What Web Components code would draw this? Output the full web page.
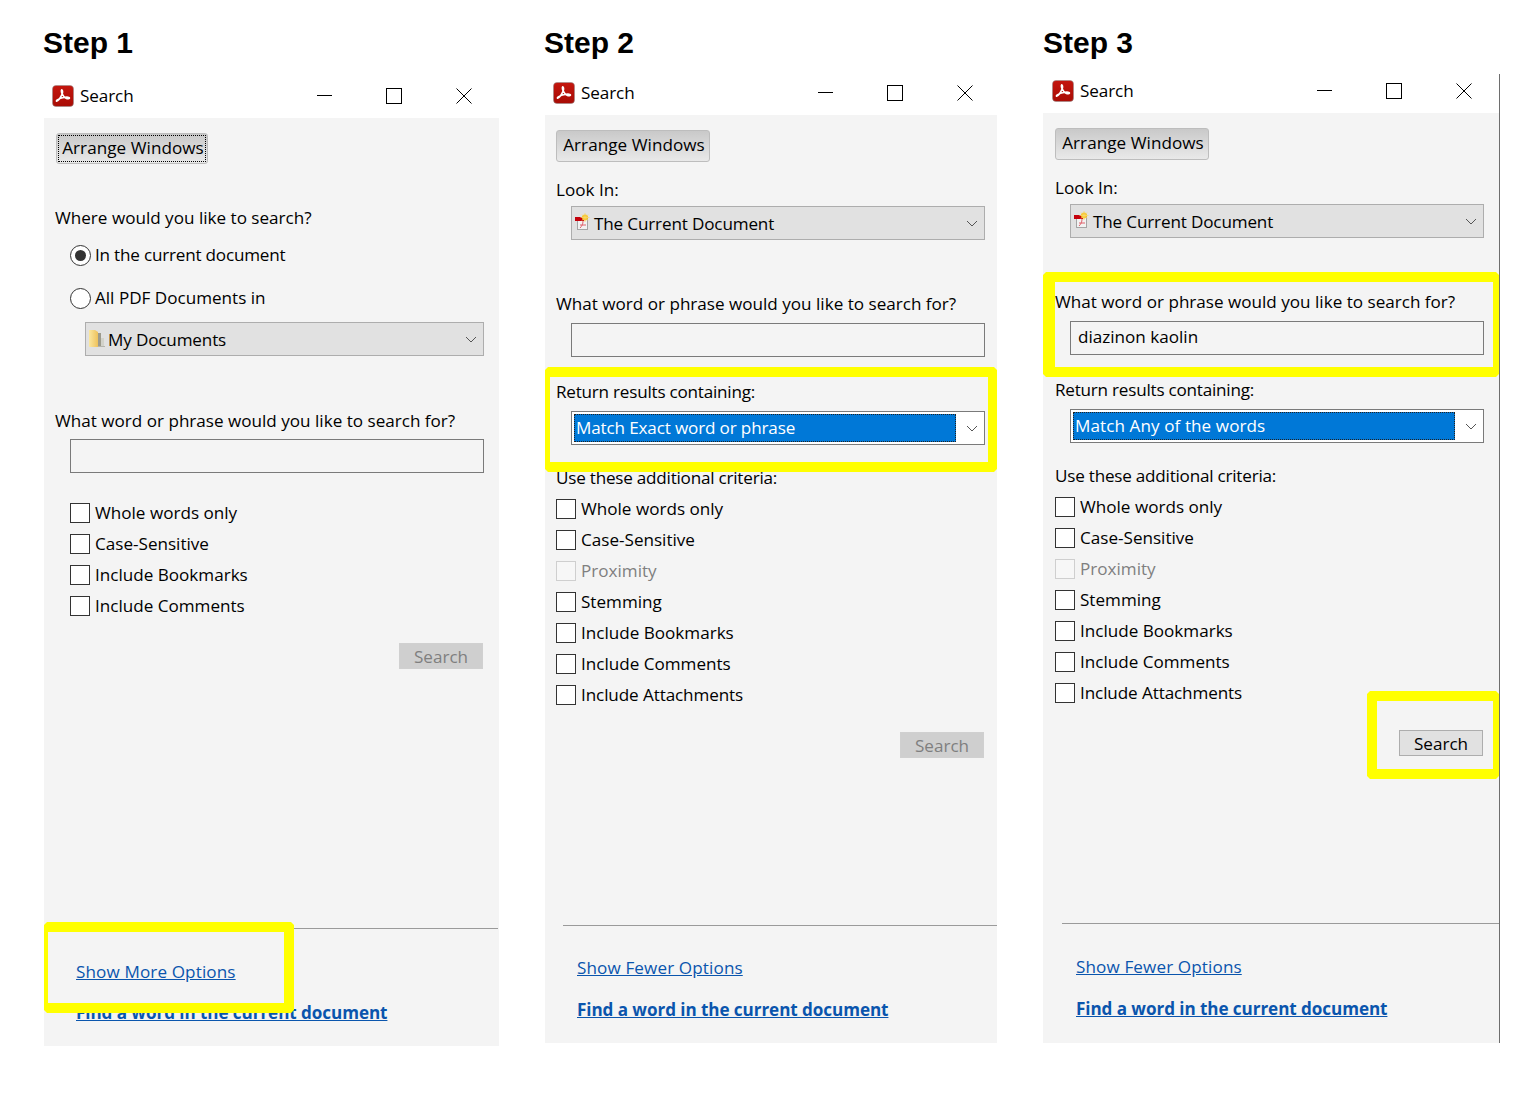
<!DOCTYPE html>
<html>
<head>
<meta charset="utf-8">
<title>Search steps</title>
<style>
  html, body { margin: 0; background: #fff; }
  body { font: 17.1px/24px "Open Sans", "Noto Sans", sans-serif; color: #000; }
  main { display: flex; align-items: flex-start; height: 1094px; padding-left: 44px; box-sizing: border-box; }
</style>
</head>
<body>
<main>
  <step-column heading="Step 1" style="--col-w:455px;--head-h:74px;--head-x:-1px">
    <search-window style="--bar-h:44px;--panel-h:928px;--pad-l:11px;--pad-r:15px;--ctl-r:27px;--check-l:15px">
      <arrange-button focused style="margin-left:1px;width:152px;height:31px"></arrange-button>
      <form-label style="margin-top:42px">Where would you like to search?</form-label>
      <radio-row checked style="margin-top:13px;letter-spacing:-.2px">In the current document</radio-row>
      <radio-row style="margin-top:19px">All PDF Documents in</radio-row>
      <combo-box icon="folder" style="margin:12px 0 0 30px">My Documents</combo-box>
      <form-label style="margin-top:53px">What word or phrase would you like to search for?</form-label>
      <text-box style="margin:6px 0 0 15px"></text-box>
      <check-row style="margin-top:24px">Whole words only</check-row>
      <check-row>Case-Sensitive</check-row>
      <check-row>Include Bookmarks</check-row>
      <check-row>Include Comments</check-row>
      <search-button disabled style="margin-top:22px"></search-button>
      <link-footer more="Show More Options" style="--hr-l:7px;--hr-r:-14px;--link-l:21px;--more-t:31px;--find-t:17px"></link-footer>
      <mark-box slot="marks" style="--l:0;--t:848px;--w:250px;--h:91px;--bl:4px;--br:10px"></mark-box>
    </search-window>
  </step-column>

  <step-column heading="Step 2" style="--col-w:452px;--col-l:46px;--head-h:71px;--head-x:-1px">
    <search-window style="--bar-h:44px;--panel-h:928px;--pad-l:11px;--pad-r:12px;--ctl-r:24px">
      <arrange-button style="width:154px;height:32px"></arrange-button>
      <form-label style="margin-top:16px">Look In:</form-label>
      <combo-box icon="pdf" style="margin:4px 0 0 15px">The Current Document</combo-box>
      <form-label style="margin-top:52px">What word or phrase would you like to search for?</form-label>
      <text-box style="margin:7px 0 0 15px"></text-box>
      <form-label style="margin-top:23px;letter-spacing:-.22px">Return results containing:</form-label>
      <combo-box selected style="margin:7px 0 0 15px">Match Exact word or phrase</combo-box>
      <form-label style="margin-top:21px;letter-spacing:-.22px">Use these additional criteria:</form-label>
      <check-row style="margin-top:3px">Whole words only</check-row>
      <check-row>Case-Sensitive</check-row>
      <check-row disabled>Proximity</check-row>
      <check-row>Stemming</check-row>
      <check-row>Include Bookmarks</check-row>
      <check-row>Include Comments</check-row>
      <check-row style="letter-spacing:-.1px">Include Attachments</check-row>
      <search-button disabled style="margin-top:22px"></search-button>
      <link-footer more="Show Fewer Options" style="--hr-l:7px;--hr-r:-12px;--link-l:21px;--more-t:30px;--find-t:18px"></link-footer>
      <mark-box slot="marks" style="--l:0;--t:296px;--w:452px;--h:105px;--bl:5px;--br:9px"></mark-box>
    </search-window>
  </step-column>

  <step-column heading="Step 3" style="--col-w:457px;--col-l:46px;--head-h:74px;--head-x:0px">
    <search-window edge style="--bar-h:39px;--bar-pb:5px;--bar-l:9px;--panel-h:930px;--pad-l:12px;--pad-r:15px;--ctl-r:27px">
      <arrange-button style="width:154px;height:32px"></arrange-button>
      <form-label style="margin-top:16px">Look In:</form-label>
      <combo-box icon="pdf" style="margin:4px 0 0 15px">The Current Document</combo-box>
      <form-label style="margin-top:52px">What word or phrase would you like to search for?</form-label>
      <text-box value="diazinon kaolin" style="margin:7px 0 0 15px"></text-box>
      <form-label style="margin-top:23px;letter-spacing:-.22px">Return results containing:</form-label>
      <combo-box selected style="margin:7px 0 0 15px;letter-spacing:.08px">Match Any of the words</combo-box>
      <form-label style="margin-top:21px;letter-spacing:-.22px">Use these additional criteria:</form-label>
      <check-row style="margin-top:3px">Whole words only</check-row>
      <check-row>Case-Sensitive</check-row>
      <check-row disabled>Proximity</check-row>
      <check-row>Stemming</check-row>
      <check-row>Include Bookmarks</check-row>
      <check-row>Include Comments</check-row>
      <check-row style="letter-spacing:-.1px">Include Attachments</check-row>
      <search-button style="margin-top:22px"></search-button>
      <link-footer more="Show Fewer Options" style="--hr-l:7px;--hr-r:-15px;--link-l:21px;--more-t:31px;--find-t:18px;--foot-pb:1px"></link-footer>
      <mark-box slot="marks" style="--l:0;--t:198px;--w:456px;--h:105px;--bl:12px;--br:6px"></mark-box>
      <mark-box slot="marks" style="--l:324px;--t:617px;--w:132px;--h:88px;--bl:10px;--br:6px"></mark-box>
    </search-window>
  </step-column>
</main>

<script>
// little helper, every element just gets its html in an open shadow root
function shadow(el, html) {
  el.attachShadow({ mode: 'open' }).innerHTML = html
}

const chevron = `<svg width="12" height="7" viewBox="0 0 12 7"><path d="M1 1l5 5 5-5" fill="none" stroke="#555" stroke-width="1"/></svg>`

const icons = {
  folder: `<svg width="18" height="20" viewBox="0 0 18 20">
    <defs><linearGradient id="f" x1="0" y1="0" x2="1" y2="0"><stop offset="0" stop-color="#fbe7a0"/><stop offset="1" stop-color="#eec25c"/></linearGradient></defs>
    <path d="M1 2h6l3 2v15H2a1 1 0 0 1-1-1z" fill="url(#f)"/>
    <path d="M10 5h3v13h-3z" fill="#9c9a8c"/>
    <path d="M13 10h3v8h-3z" fill="#d2d2ca"/>
    <path d="M10 18h7v1h-7z" fill="#b4b4ac"/></svg>`,
  pdf: `<svg width="18" height="18" viewBox="0 0 18 18">
    <rect x="3.500" y="5.500" width="10" height="11" fill="#f2f2f2" stroke="#a5a5a5"/>
    <path d="M1 4h9v4H1z" fill="#c4000b"/>
    <path d="M6 15c2-2 3-4 3-7M6 12h6" fill="none" stroke="#e0606a"/>
    <circle cx="11" cy="4.500" r="3" fill="#f6c21c"/>
    <path d="M11 0v9M6.500 4.500h9M8 1.500l6 6M14 1.500l-6 6" stroke="#f8d870" stroke-width=".8"/></svg>`
}

class StepColumn extends HTMLElement {
  connectedCallback() {
    shadow(this, `<style>
      :host { display: block; flex: none; width: var(--col-w); margin-left: var(--col-l, 0); }
      header { height: var(--head-h); box-sizing: border-box; padding-top: 25px; margin-left: var(--head-x);
        font: bold 30px/36px "Liberation Sans", Arial, sans-serif; color: #000; }
    </style><header>${this.getAttribute('heading')}</header><slot></slot>`)
  }
}

class SearchWindow extends HTMLElement {
  connectedCallback() {
    shadow(this, `<style>
      :host { display: block; position: relative; }
      :host([edge]) { border-right: 1px solid #6e6e6e; }
      .bar { height: var(--bar-h); box-sizing: border-box; padding: 0 var(--ctl-r) var(--bar-pb, 0) var(--bar-l, 8px);
        display: flex; align-items: center; background: #fff; }
      .logo { width: 22px; height: 22px; flex: none; }
      .name { margin-left: 6px; letter-spacing: -.1px; }
      .ctl { display: flex; margin-left: auto; gap: 55px; }
      .ctl svg { display: block; width: 16px; height: 16px; }
      .ctl svg:first-child { margin-right: -2px; }
      .ctl svg:nth-child(2) { margin-right: -1px; }
      .panel { height: var(--panel-h); box-sizing: border-box; background: #f4f4f4;
        padding: 15px var(--pad-r) 0 var(--pad-l); display: flex; flex-direction: column; }
    </style>
    <div class="bar">
      <svg class="logo" viewBox="0 0 22 22">
        <defs><linearGradient id="g" x1="0" y1="0" x2="0" y2="1"><stop offset="0" stop-color="#c4160e"/><stop offset="1" stop-color="#a80c05"/></linearGradient></defs>
        <rect x=".5" y=".5" width="21" height="21" rx="3.500" fill="url(#g)" stroke="#8d8d8d" stroke-opacity=".5"/>
        <path d="M4.500 16.200c1.600-.3 3.900-3.200 5.600-7 .7-1.600.6-4-.2-4.300-.8-.2-.6 2.400.2 4 1.300 2.600 3 4.200 4.400 4.700 1 .3 3 .2 3-.6s-2.200-1-4.500-.7c-3 .4-6 1.300-7.700 2.500-.7.5-1.100 1.100-.8 1.400z" fill="none" stroke="#fff" stroke-width="1.600" stroke-linejoin="round"/>
      </svg>
      <span class="name">Search</span>
      <div class="ctl">
        <svg viewBox="0 0 16 16"><path d="M0 7.500h15" stroke="#000" fill="none"/></svg>
        <svg viewBox="0 0 16 16"><rect x=".5" y=".5" width="15" height="15" fill="none" stroke="#000"/></svg>
        <svg viewBox="0 0 16 16"><path d="M.5.5l15 15M15.500.5l-15 15" stroke="#000" fill="none"/></svg>
      </div>
    </div>
    <div class="panel"><slot></slot></div>
    <slot name="marks"></slot>`)
  }
}

class ArrangeButton extends HTMLElement {
  connectedCallback() {
    shadow(this, `<style>
      :host { display: flex; flex: none; align-self: flex-start; box-sizing: border-box; align-items: center; justify-content: center;
        padding: 0 0 2px 2px; border: 1px solid #bdbdbd; border-radius: 3px; background: linear-gradient(#c9c9c9, #e9e9e9);
        position: relative; letter-spacing: .05px; }
      :host([focused])::after { content: ""; position: absolute; inset: 1px; border: 1px dotted #000; }
    </style>Arrange Windows`)
  }
}

class FormLabel extends HTMLElement {
  connectedCallback() {
    shadow(this, `<style>:host { display: block; flex: none; height: 24px; white-space: nowrap; }</style><slot></slot>`)
  }
}

class RadioRow extends HTMLElement {
  connectedCallback() {
    shadow(this, `<style>
      :host { display: flex; flex: none; align-items: center; height: 24px; margin-left: 15px; white-space: nowrap; }
      i { width: 21px; height: 21px; box-sizing: border-box; border: 1px solid #333; border-radius: 50%; background: #fff;
        margin-right: 4px; display: flex; align-items: center; justify-content: center; }
      :host([checked]) i::after { content: ""; width: 11px; height: 11px; border-radius: 50%; background: #333; }
    </style><i></i><slot></slot>`)
  }
}

class ComboBox extends HTMLElement {
  connectedCallback() {
    const icon = icons[this.getAttribute('icon')] || ''
    shadow(this, `<style>
      :host { display: flex; flex: none; align-items: center; height: 34px; box-sizing: border-box; position: relative;
        border: 1px solid #adadad; background: #e1e1e1; white-space: nowrap; letter-spacing: -.15px; }
      :host([selected]) { border-color: #7a7a7a; background: #fff; }
      .icon { width: 22px; flex: none; display: flex; align-items: center; justify-content: center; margin-bottom: 2px; }
      .text { padding-top: 2px; }
      .sel { flex: 1; align-self: stretch; display: flex; align-items: center; margin: 2px 28px 2px 2px; padding-left: 2px;
        background: #0078d7; color: #fff; outline: 1px dotted #222; outline-offset: -1px; }
      .arrow { position: absolute; right: 6px; top: 50%; margin-top: -3px; line-height: 0; }
    </style>
    ${this.hasAttribute('selected')
      ? `<div class="sel"><slot></slot></div>`
      : `<div class="icon">${icon}</div><div class="text"><slot></slot></div>`}
    <div class="arrow">${chevron}</div>`)
  }
}

class TextBox extends HTMLElement {
  connectedCallback() {
    shadow(this, `<style>
      :host { display: flex; flex: none; align-items: center; height: 34px; box-sizing: border-box;
        border: 1px solid #7a7a7a; padding: 0 0 2px 7px; }
    </style>${this.getAttribute('value') || ''}`)
  }
}

class CheckRow extends HTMLElement {
  connectedCallback() {
    shadow(this, `<style>
      :host { display: flex; flex: none; align-items: center; height: 31px; margin-left: var(--check-l, 0); white-space: nowrap; }
      i { width: 20px; height: 20px; box-sizing: border-box; border: 1px solid #333; background: #fff; margin-right: 5px; }
      :host([disabled]) { color: #7f7f7f; }
      :host([disabled]) i { border-color: #cfcfcf; background: #f7f7f7; }
    </style><i></i><slot></slot>`)
  }
}

class SearchButton extends HTMLElement {
  connectedCallback() {
    shadow(this, `<style>
      :host { display: flex; flex: none; align-self: flex-end; align-items: center; justify-content: center;
        width: 84px; height: 26px; box-sizing: border-box; margin-right: 1px; padding-top: 2px;
        border: 1px solid #adadad; background: #e1e1e1; }
      :host([disabled]) { border-color: #d0d0d0; background: #cfcfcf; color: #7f7f7f; }
    </style>Search`)
  }
}

class LinkFooter extends HTMLElement {
  connectedCallback() {
    shadow(this, `<style>
      :host { display: block; margin-top: auto; padding-bottom: var(--foot-pb, 0); }
      hr { height: 1px; border: 0; margin: 0 var(--hr-r) 0 var(--hr-l); background: #9a9a9a; }
      a { display: block; width: max-content; margin-left: var(--link-l); color: #0a55ad; text-decoration: underline; white-space: nowrap; }
      .more { margin-top: var(--more-t); letter-spacing: .12px; }
      .find { margin-top: var(--find-t); margin-bottom: 21px; font-weight: 700; letter-spacing: -.07px; }
    </style><hr>
    <a class="more" href="#">${this.getAttribute('more')}</a>
    <a class="find" href="#">Find a word in the current document</a>`)
  }
}

// the yellow annotation rectangles lie over the dialog
class MarkBox extends HTMLElement {
  connectedCallback() {
    shadow(this, `<style>
      :host { display: block; position: absolute; box-sizing: border-box; pointer-events: none;
        left: var(--l); top: var(--t); width: var(--w); height: var(--h);
        border: 10px solid #ffff00; border-left-width: var(--bl); border-right-width: var(--br);
        clip-path: polygon(3px 0, calc(100% - 3px) 0, 100% 3px, 100% calc(100% - 3px), calc(100% - 3px) 100%, 3px 100%, 0 calc(100% - 3px), 0 3px); }
    </style>`)
  }
}

customElements.define('step-column', StepColumn)
customElements.define('search-window', SearchWindow)
customElements.define('arrange-button', ArrangeButton)
customElements.define('form-label', FormLabel)
customElements.define('radio-row', RadioRow)
customElements.define('combo-box', ComboBox)
customElements.define('text-box', TextBox)
customElements.define('check-row', CheckRow)
customElements.define('search-button', SearchButton)
customElements.define('link-footer', LinkFooter)
customElements.define('mark-box', MarkBox)
</script>
</body>
</html>
